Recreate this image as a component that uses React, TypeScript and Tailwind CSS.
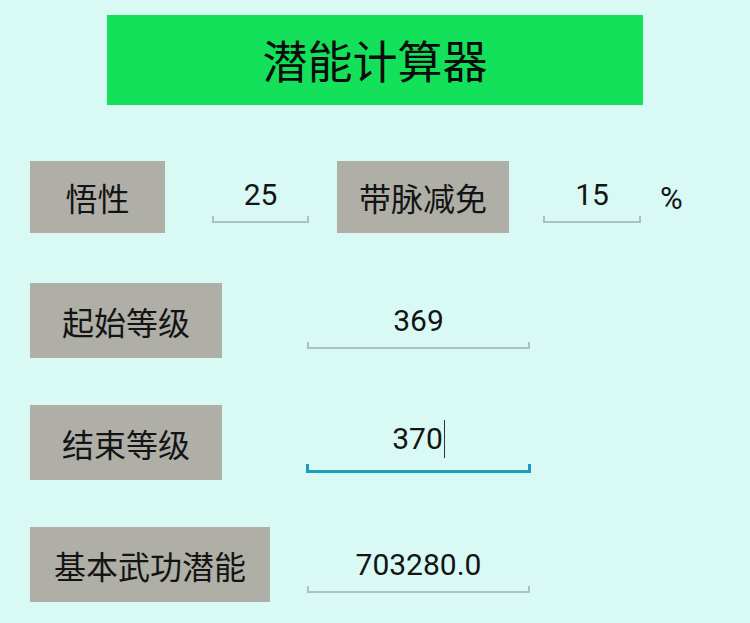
const cjk = "font-['Noto_Sans_CJK_SC','Noto_Sans',sans-serif]";
const num = "font-['Roboto','Noto_Sans',sans-serif]";

function Label({ text, width }: { text: string; width: string }) {
    return (
        <div className={`${width} h-full bg-[#afafa7] flex items-center justify-center text-[32px] text-[#141414] ${cjk}`}>
            {text}
        </div>
    );
}

function Field({
    value,
    width,
    active = false,
    cursor = false,
    pb = 'pb-[9px]',
}: {
    value: string;
    width: string;
    active?: boolean;
    cursor?: boolean;
    pb?: string;
}) {
    return (
        <div className={`${width} h-full flex flex-col justify-end ${pb}`}>
            <div className={`flex justify-center items-center text-[30px] leading-none text-[#141414] mb-[6px] ${num}`}>
                <span>{value}</span>
                {cursor && <span className="w-px h-[38px] bg-[#333] ml-[1px]" />}
            </div>
            <div
                className={
                    active
                        ? 'h-[9px] border-x-[3px] border-b-[3px] border-[#1b9cc0]'
                        : 'h-[7px] border-x-[2px] border-b-[2px] border-[#abc2be]'
                }
            />
        </div>
    );
}

export default function App() {
    return (
        <div className="w-[750px] h-[623px] bg-[#d9f9f4] overflow-hidden flex flex-col">
            <div className="pt-[15px] flex justify-center">
                <div className={`w-[536px] h-[90px] bg-[#13e15a] flex items-center justify-center text-[45px] text-[#0c0c0c] ${cjk}`}>
                    潜能计算器
                </div>
            </div>

            {/* row 1 */}
            <div className="mt-[56px] h-[72px] flex pl-[30px]">
                <Label text="悟性" width="w-[135px]" />
                <Field value="25" width="w-[97px] ml-[47px]" pb="pb-[10px]" />
                <div className="ml-[28px] h-full">
                    <Label text="带脉减免" width="w-[172px]" />
                </div>
                <Field value="15" width="w-[98px] ml-[34px]" pb="pb-[10px]" />
                <div className={`ml-[19px] h-full flex items-center pt-[4px] text-[31px] text-[#141414] ${num}`}>%</div>
            </div>

            {/* row 2 */}
            <div className="mt-[50px] h-[75px] flex pl-[30px]">
                <Label text="起始等级" width="w-[192px]" />
                <Field value="369" width="w-[223px] ml-[85px]" />
            </div>

            {/* row 3 */}
            <div className="mt-[47px] h-[75px] flex pl-[30px]">
                <Label text="结束等级" width="w-[192px]" />
                <Field value="370" width="w-[225px] ml-[84px]" active cursor pb="pb-[7px]" />
            </div>

            {/* row 4 */}
            <div className="mt-[47px] h-[75px] flex pl-[30px]">
                <Label text="基本武功潜能" width="w-[240px]" />
                <Field value="703280.0" width="w-[223px] ml-[37px]" />
            </div>
        </div>
    );
}
